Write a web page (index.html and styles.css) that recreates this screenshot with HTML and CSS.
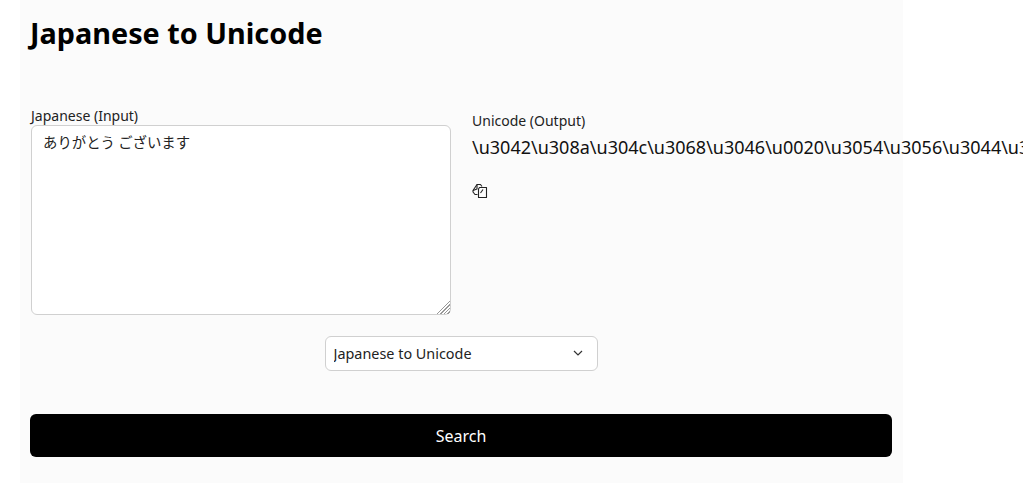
FILE: index.html
```html
<!DOCTYPE html>
<html lang="en">
<head>
    <meta charset="UTF-8">
    <meta name="viewport" content="width=device-width, initial-scale=1.0">
    <title>Japanese to Unicode</title>
    <link rel="stylesheet" href="styles.css">
</head>
<body>
    <main class="panel">
        <h1 class="title">Japanese to Unicode</h1>

        <div class="columns">
            <div class="input-col">
                <label class="field-label" for="source">Japanese (Input)</label>
                <textarea class="source" id="source">ありがとう ございます</textarea>
            </div>
            <div class="output-col">
                <div class="field-label">Unicode (Output)</div>
                <div class="output">\u3042\u308a\u304c\u3068\u3046\u0020\u3054\u3056\u3044\u307e\u3059</div>
                <button class="copy" aria-label="Copy">
                    <svg width="16" height="16" viewBox="0 0 16 16" fill="none" stroke="#222" stroke-width="1.1" stroke-linejoin="round">
                        <path d="M5.5 11.5H3L1 9V7.5L5 1.5H8.5L10 3.5"/>
                        <path d="M5 1.5V6L1 7.5"/>
                        <path d="M7.5 4.5H14.5V14.5H6.5V6Z"/>
                        <path d="M8.5 10L11 6.5"/>
                    </svg>
                </button>
            </div>
        </div>

        <div class="mode-row">
            <div class="mode">
                <select class="mode-select">
                    <option>Japanese to Unicode</option>
                    <option>Unicode to Japanese</option>
                </select>
                <svg class="chevron" width="10" height="6" viewBox="0 0 10 6" fill="none" stroke="#333" stroke-width="1.2">
                    <path d="M1 1L5 5L9 1"/>
                </svg>
            </div>
        </div>

        <button class="search">Search</button>
    </main>
</body>
</html>
```

FILE: styles.css
```css
html, body {
    height: 100%;
}

body {
    margin: 0;
    background: #fff;
    color: #000;
    font-family: "Noto Sans", "Noto Sans CJK JP", sans-serif;
    overflow: hidden;
}

.panel {
    box-sizing: border-box;
    width: 883px;
    min-height: 100%;
    margin-left: 20px;
    padding: 14px 11px 0 10px;
    background: #fbfbfb;
}

.title {
    margin: 0;
    font-size: 28.8px;
    line-height: 38px;
    font-weight: 700;
}

.columns {
    display: flex;
    gap: 21px;
    margin-top: 55px;
}

.input-col {
    width: 420px;
    margin-left: 1px;
    flex: none;
}

.field-label {
    display: block;
    font-size: 14px;
    line-height: 18px;
    color: #222;
}

.source {
    display: block;
    box-sizing: border-box;
    width: 100%;
    height: 190px;
    padding: 6px 11px;
    border: 1px solid #d0d0d0;
    border-radius: 6px;
    background: #fff;
    color: #222;
    font-family: "Noto Sans CJK JP", "Noto Sans", sans-serif;
    font-size: 14.4px;
    line-height: 20px;
    outline: none;
}

.source::-webkit-resizer {
    background:
        linear-gradient(135deg, #fff 52%, transparent 52%),
        repeating-linear-gradient(135deg, transparent 0 1.5px, #999 1.5px 2.5px);
}

.output-col {
    min-width: 0;
    padding-top: 5px;
}

.output {
    margin-top: 5px;
    font-size: 18px;
    line-height: 24px;
    color: #111;
    white-space: nowrap;
}

.copy {
    display: block;
    height: 16px;
    margin-top: 24px;
    padding: 0;
    border: none;
    background: none;
}

.mode-row {
    display: flex;
    justify-content: center;
    margin-top: 21px;
}

.mode {
    position: relative;
    width: 273px;
}

.mode-select {
    display: block;
    box-sizing: border-box;
    width: 100%;
    height: 35px;
    padding: 0 8px;
    border: 1px solid #d0d0d0;
    border-radius: 6px;
    background: #fff;
    color: #222;
    font-family: "Noto Sans", sans-serif;
    font-size: 14.4px;
    appearance: none;
}

.chevron {
    position: absolute;
    top: 14px;
    right: 15px;
}

.search {
    display: block;
    width: 862px;
    height: 43px;
    margin-top: 43px;
    border: none;
    border-radius: 6px;
    background: #000;
    color: #fff;
    font-family: "Noto Sans", sans-serif;
    font-size: 16px;
    cursor: pointer;
}
```
